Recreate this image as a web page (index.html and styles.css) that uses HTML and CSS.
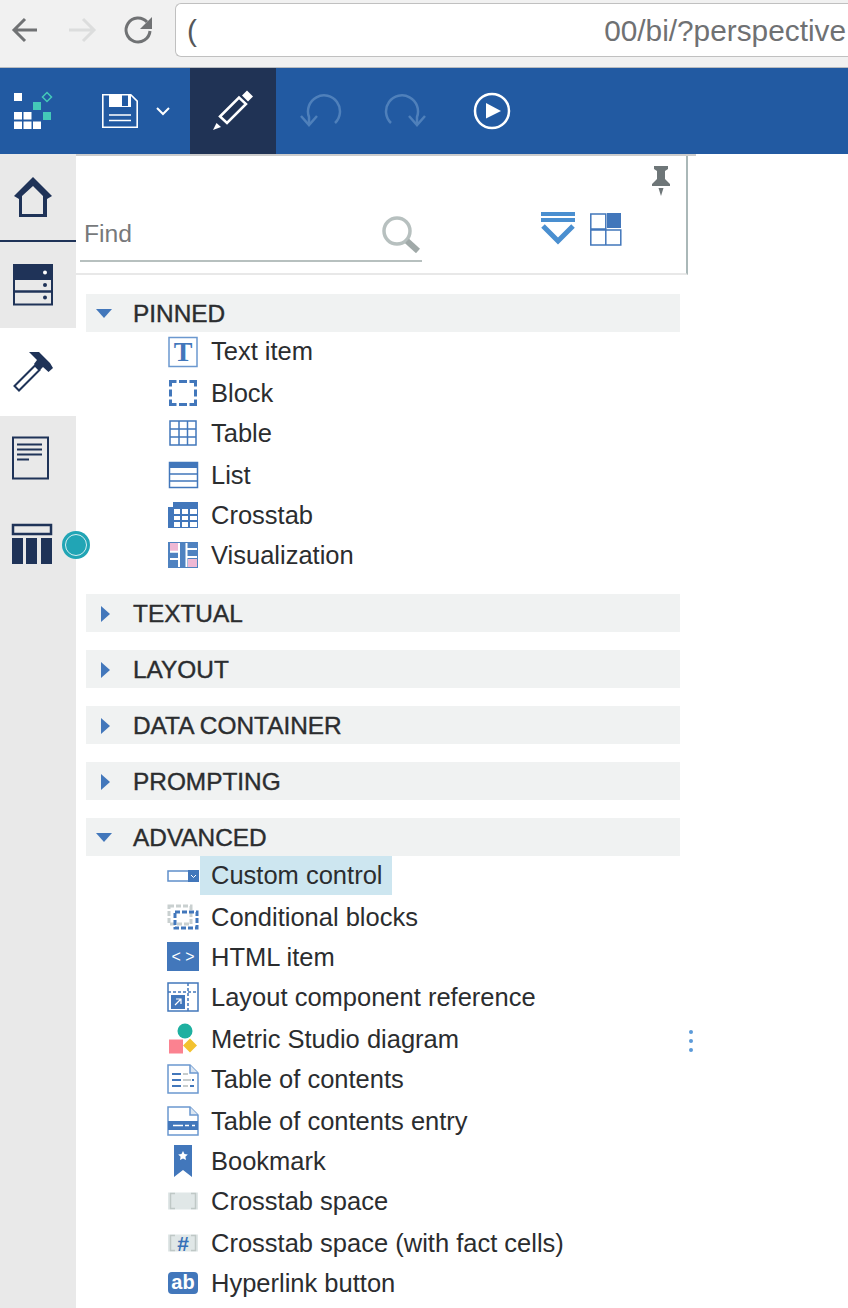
FILE: index.html
```html
<!DOCTYPE html>
<html lang="en">
<head>
  <meta charset="UTF-8">
  <title>Report authoring</title>
  <link rel="stylesheet" href="styles.css">
</head>
<body>

  <div class="browser-bar">
    <svg class="nav-icon" width="172" height="60" viewBox="0 0 172 60">
      <path d="M37 30H15M25 19L14 30l11 11" fill="none" stroke="#707274" stroke-width="3"/>
      <path d="M69 30h24M83 19l11 11-11 11" fill="none" stroke="#dcdddd" stroke-width="3"/>
      <path d="M147 22a12 12 0 1 0 3 9" fill="none" stroke="#707274" stroke-width="3"/>
      <path d="M152 17v12h-12z" fill="#707274"/>
    </svg>
    <div class="address">
      <span class="address-cut">(</span>
      <span class="address-url">00/bi/?perspective</span>
    </div>
  </div>

  <div class="toolbar">
    <div class="tool tool-logo">
      <svg width="40" height="40" viewBox="13 92 40 40">
        <g fill="#fff">
          <rect x="14" y="94" width="8" height="8"/>
          <rect x="14" y="113" width="8" height="7.5"/>
          <rect x="23.5" y="113" width="8" height="7.5"/>
          <rect x="14" y="122.500" width="8" height="7.500"/>
          <rect x="23.500" y="122.500" width="8" height="7.500"/>
          <rect x="33" y="122.500" width="8" height="7.500"/>
        </g>
        <rect x="33" y="103" width="8" height="8" fill="#44c9b8"/>
        <rect x="43" y="113" width="8" height="8" fill="#44c9b8"/>
        <path d="M47 93.500l4.500 4.500-4.500 4.500-4.500-4.500z" fill="none" stroke="#44c9b8" stroke-width="1.500"/>
      </svg>
    </div>
    <div class="tool tool-save">
      <svg width="72" height="40" viewBox="100 91 72 40">
        <path d="M102.800 94.800h28l6.400 6.400v26h-34.400z" fill="none" stroke="#fff" stroke-width="1.600"/>
        <path d="M109 94h22v13h-22z" fill="#fff"/>
        <rect x="122" y="95.500" width="6" height="10.500" fill="#225aa2"/>
        <path d="M109 115h22M109 120.500h22" stroke="#fff" stroke-width="1.500"/>
        <path d="M157 108l6 6 6-6" fill="none" stroke="#fff" stroke-width="2"/>
      </svg>
    </div>
    <div class="tool tool-edit">
      <svg width="42" height="42" viewBox="212 91 42 42">
        <path d="M220 117.500l19-19 7 6.500-19 19z" fill="none" stroke="#fff" stroke-width="2.500"/>
        <path d="M242 96.500l5-5 6 6-5 5z" fill="#fff"/>
        <path d="M213 131l3.500-7 4.500 4z" fill="#fff"/>
      </svg>
    </div>
    <div class="tool tool-undo">
      <svg width="44" height="34" viewBox="298 93 44 34">
        <path d="M335 122a16 16 0 1 0-26-6v8" fill="none" stroke="#4f80bb" stroke-width="2.500"/>
        <path d="M301 115l8 9 8-9" fill="none" stroke="#4f80bb" stroke-width="2.500"/>
      </svg>
    </div>
    <div class="tool tool-redo">
      <svg width="44" height="34" viewBox="384 93 44 34">
        <path d="M391 122a16 16 0 1 1 26-6v8" fill="none" stroke="#4f80bb" stroke-width="2.500"/>
        <path d="M409 115l8 9 8-9" fill="none" stroke="#4f80bb" stroke-width="2.500"/>
      </svg>
    </div>
    <div class="tool tool-run">
      <svg width="38" height="38" viewBox="473 92 38 38">
        <circle cx="492" cy="111" r="17" fill="none" stroke="#fff" stroke-width="2.500"/>
        <path d="M486 103l15 8-15 7.500z" fill="#fff"/>
      </svg>
    </div>
  </div>

  <div class="main">
    <aside class="rail">
      <div class="tab tab-home">
        <svg width="40" height="42" viewBox="13 177 40 42">
          <path fill-rule="evenodd" fill="#1f3358" d="M33 178l19 19-5 3v18H19v-18l-5-3zM33 187l-11 10v18h21v-18z"/>
        </svg>
      </div>
      <div class="tab tab-data">
        <svg width="40" height="42" viewBox="13 265 40 42">
          <path fill="#1f3358" d="M13 265h40v15H13z"/>
          <rect x="14" y="280" width="38" height="25.500" fill="none" stroke="#1f3358" stroke-width="2"/>
          <path d="M14 292.500h38" stroke="#1f3358" stroke-width="2.500"/>
          <circle cx="45" cy="273.500" r="2" fill="#fff"/>
          <circle cx="45" cy="286" r="2" fill="#1f3358"/>
          <circle cx="45" cy="298.500" r="2" fill="#1f3358"/>
        </svg>
      </div>
      <div class="tab tab-tools">
        <svg width="42" height="42" viewBox="12 351 42 42">
          <path d="M14.500 386l20.500-20.500 4.500 4.500-20.500 20.500z" fill="none" stroke="#1f3358" stroke-width="2"/>
          <path d="M29 352h10l11 11 3 5-4.500 4-5.500-5-3 3-6-6 3-4z" fill="#1f3358"/>
        </svg>
      </div>
      <div class="tab tab-report">
        <svg width="40" height="44" viewBox="11 436 40 44">
          <rect x="13" y="437.500" width="35" height="41" fill="none" stroke="#1f3358" stroke-width="2"/>
          <path d="M17 444.500h25M17 449.500h25M17 454.500h25M17 459.500h12" stroke="#1f3358" stroke-width="2"/>
        </svg>
      </div>
      <div class="tab tab-query">
        <svg width="42" height="42" viewBox="11 523 42 42">
          <rect x="13" y="525" width="38" height="9" fill="none" stroke="#1f3358" stroke-width="2.500"/>
          <path d="M12 538h11v26H12zM26 538h11v26H26zM41 538h11v26H41z" fill="#1f3358"/>
        </svg>
      </div>
      <div class="badge"></div>
    </aside>

    <div class="content">
      <div class="panel-edge"></div>
      <div class="finder">
        <div class="pin-row">
          <svg width="20" height="30" viewBox="0 0 20 30">
            <path d="M3 0h14v3l-3 2v8l5 5v2H1v-2l5-5V5L3 3z" fill="#6e7678"/>
            <path d="M7.500 22h5L10 30z" fill="#6e7678"/>
          </svg>
        </div>
        <div class="find-row">
          <div class="find-box">
            <span class="find-label">Find</span>
            <svg class="find-icon" width="40" height="38" viewBox="0 0 40 38">
              <circle cx="17" cy="16" r="13" fill="none" stroke="#b7c0bf" stroke-width="3.500"/>
              <path d="M27 26l11 10" stroke="#a0a9a8" stroke-width="6"/>
            </svg>
          </div>
          <svg class="collapse-icon" width="34" height="34" viewBox="0 0 34 34">
            <path d="M0 0h34v4H0zM0 6h34v4H0z" fill="#4a8fd0"/>
            <path d="M2 14l15 15 15-15" fill="none" stroke="#4a8fd0" stroke-width="5"/>
          </svg>
          <svg class="tile-icon" width="32" height="33" viewBox="0 0 32 33">
            <path d="M.8 1h15v15H.8zM.8 17h15v15H.8zM15.800 17h15v15h-15z" fill="none" stroke="#4277bb" stroke-width="1.500"/>
            <path d="M17 0h14v15H17z" fill="#4277bb"/>
          </svg>
        </div>
      </div>

      <div class="list">
        <section class="group group-open group-pinned">
          <div class="group-head"><span class="caret-down"></span>PINNED</div>
          <div class="item">
            <svg width="32" height="32" viewBox="0 0 32 32">
              <rect x="2" y="1.500" width="28" height="29" fill="#fff" stroke="#6b98cf" stroke-width="1.500"/>
              <text x="16" y="25" class="glyph-t">T</text>
            </svg>
            <span class="label">Text item</span>
          </div>
          <div class="item tall">
            <svg width="32" height="32" viewBox="0 0 32 32">
              <path d="M3.500 9.500v-5h6M22.500 4.500h6v5M28.500 22.500v5h-6M9.500 27.500h-6v-5M12 4.500h8M12 27.500h8M3.500 12.500v7M28.500 12.500v7" fill="none" stroke="#4277bb" stroke-width="3"/>
            </svg>
            <span class="label">Block</span>
          </div>
          <div class="item">
            <svg width="32" height="32" viewBox="0 0 32 32">
              <rect x="3" y="4" width="26" height="24" fill="none" stroke="#4277bb" stroke-width="1.500"/>
              <path d="M12 4v24M20.500 4v24M3 12h26M3 20h26" stroke="#4277bb" stroke-width="1.500"/>
            </svg>
            <span class="label">Table</span>
          </div>
          <div class="item tall">
            <svg width="32" height="32" viewBox="0 0 32 32">
              <rect x="2" y="3" width="29" height="6" fill="#4277bb"/>
              <rect x="2.500" y="3.500" width="28" height="25" fill="none" stroke="#4277bb" stroke-width="1.500"/>
              <path d="M2 15h29M2 22h29" stroke="#4277bb" stroke-width="1.500"/>
            </svg>
            <span class="label">List</span>
          </div>
          <div class="item">
            <svg width="32" height="32" viewBox="0 0 32 32">
              <path d="M6 3h25v26H1V8h5z" fill="#4277bb"/>
              <path d="M7 10h6v5H7zM15 10h6v5h-6zM23 10h7v5h-7zM7 17h6v4H7zM15 17h6v4h-6zM23 17h7v4h-7zM7 23h6v5H7zM15 23h6v5h-6zM23 23h7v5h-7z" fill="#fff"/>
            </svg>
            <span class="label">Crosstab</span>
          </div>
          <div class="item">
            <svg width="32" height="32" viewBox="0 0 32 32">
              <rect x="1" y="3" width="30" height="26" fill="#4f82c0"/>
              <path d="M3 4h8v8H3zM21 20h9v8h-9z" fill="#eeb8d4"/>
              <path d="M12 4v24M19.500 4v24M3 12.700h9M3 20h9M20 10h10M20 18h10" stroke="#fff" stroke-width="2"/>
            </svg>
            <span class="label">Visualization</span>
          </div>
        </section>

        <section class="group">
          <div class="group-head"><span class="caret-right"></span>TEXTUAL</div>
        </section>
        <section class="group">
          <div class="group-head"><span class="caret-right"></span>LAYOUT</div>
        </section>
        <section class="group">
          <div class="group-head"><span class="caret-right"></span>DATA CONTAINER</div>
        </section>
        <section class="group">
          <div class="group-head"><span class="caret-right"></span>PROMPTING</div>
        </section>

        <section class="group group-open">
          <div class="group-head"><span class="caret-down"></span>ADVANCED</div>
          <div class="item">
            <svg width="32" height="32" viewBox="0 0 32 32">
              <rect x="1" y="11" width="31" height="10" fill="#fff" stroke="#5f8fca" stroke-width="1.500"/>
              <rect x="21" y="10" width="11" height="12" fill="#4277bb"/>
              <path d="M24 15l2.500 2.500 2.500-2.500" fill="none" stroke="#fff"/>
            </svg>
            <span class="label label-on">Custom control</span>
          </div>
          <div class="item tall">
            <svg width="32" height="32" viewBox="0 0 32 32">
              <rect x="2" y="5" width="22" height="18" fill="none" stroke="#c9d0d0" stroke-width="3" stroke-dasharray="5 2"/>
              <rect x="8" y="11" width="22" height="16" fill="none" stroke="#4277bb" stroke-width="3" stroke-dasharray="5 2"/>
            </svg>
            <span class="label">Conditional blocks</span>
          </div>
          <div class="item">
            <svg width="32" height="32" viewBox="0 0 32 32">
              <rect y="1" width="32" height="29" fill="#4277bb"/>
              <text x="16" y="21" class="glyph-code">&lt; &gt;</text>
            </svg>
            <span class="label">HTML item</span>
          </div>
          <div class="item">
            <svg width="32" height="32" viewBox="0 0 32 32">
              <rect x="1" y="2" width="30" height="28" fill="none" stroke="#4277bb" stroke-width="1.500"/>
              <path d="M21 2v28M1 11h30" stroke="#4277bb" stroke-width="1.500" stroke-dasharray="3 2"/>
              <rect x="4" y="14" width="14" height="14" fill="#4277bb"/>
              <path d="M8 24l6-6M9 18h5v5" fill="none" stroke="#fff" stroke-width="1.200"/>
            </svg>
            <span class="label">Layout component reference</span>
          </div>
          <div class="item tall">
            <svg width="32" height="32" viewBox="0 0 32 32">
              <circle cx="18" cy="8" r="7.500" fill="#1eb0a0"/>
              <rect x="2" y="16.500" width="14" height="14" fill="#fb8290"/>
              <path d="M23 15.500l7 7-7 7-7-7z" fill="#f3c230"/>
            </svg>
            <span class="label">Metric Studio diagram</span>
          </div>
          <div class="item">
            <svg width="32" height="32" viewBox="0 0 32 32">
              <path d="M1 2h22l8 8v20H1z" fill="none" stroke="#6b98cf" stroke-width="1.500"/>
              <path d="M23 2v8h8" fill="#dbe6f2" stroke="#6b98cf" stroke-width="1.500"/>
              <path d="M5 11h9M5 17h9M5 23h9" stroke="#4277bb" stroke-width="2"/>
              <path d="M16 11h5M16 17h8M16 23h5" stroke="#c6cccc" stroke-width="2"/>
              <path d="M25 17h2M23 23h4" stroke="#4277bb" stroke-width="2"/>
            </svg>
            <span class="label">Table of contents</span>
          </div>
          <div class="item tall">
            <svg width="32" height="32" viewBox="0 0 32 32">
              <path d="M1 2h22l8 8v20H1z" fill="#fff" stroke="#6b98cf" stroke-width="1.500"/>
              <path d="M23 2v8h8" fill="#dbe6f2" stroke="#6b98cf" stroke-width="1.500"/>
              <rect x="1" y="16" width="30" height="9" fill="#4277bb"/>
              <path d="M6 20.500h10M18 20.500h4M25 20.500h3" stroke="#fff" stroke-width="1.500"/>
            </svg>
            <span class="label">Table of contents entry</span>
          </div>
          <div class="item">
            <svg width="32" height="32" viewBox="0 0 32 32">
              <path d="M7 0h18v32l-9-7-9 7z" fill="#4277bb"/>
              <path d="M16 6l1.500 3 3.300.5-2.400 2.300.6 3.300-3-1.600-3 1.600.6-3.300-2.400-2.300 3.300-.5z" fill="#fff"/>
            </svg>
            <span class="label">Bookmark</span>
          </div>
          <div class="item">
            <svg width="32" height="32" viewBox="0 0 32 32">
              <rect x="1" y="7.500" width="30" height="17" fill="#e0e7e7"/>
              <path d="M8 8.500H3.500v15H8M24 8.500h4.500v15H24" fill="none" stroke="#bfc8c6" stroke-width="1.500"/>
            </svg>
            <span class="label">Crosstab space</span>
          </div>
          <div class="item tall">
            <svg width="32" height="32" viewBox="0 0 32 32">
              <rect x="1" y="7.500" width="30" height="17" fill="#e0e7e7"/>
              <path d="M8 8.500H3.500v15H8M24 8.500h4.500v15H24" fill="none" stroke="#bfc8c6" stroke-width="1.500"/>
              <text x="16" y="24" class="glyph-hash">#</text>
            </svg>
            <span class="label">Crosstab space (with fact cells)</span>
          </div>
          <div class="item">
            <svg width="32" height="32" viewBox="0 0 32 32">
              <rect x="1" y="5" width="30" height="22" rx="4" fill="#4277bb"/>
              <text x="16" y="22" class="glyph-ab">ab</text>
            </svg>
            <span class="label">Hyperlink button</span>
          </div>
        </section>
      </div>

      <div class="kebab"><span></span><span></span><span></span></div>
    </div>
  </div>

</body>
</html>
```

FILE: styles.css
```css
html, body {
  margin: 0;
  height: 100%;
  overflow: hidden;
}

body {
  width: 848px;
  height: 1308px;
  background: #fff;
  font-family: "Liberation Sans", Arial, sans-serif;
  color: #2b2d2f;
}

svg {
  display: block;
  flex: none;
}

.browser-bar {
  display: flex;
  height: 67px;
  background: #f1f1f1;
  border-bottom: 1px solid #b9bcc0;
}

.nav-icon {
  margin-right: 3px;
}

.address {
  display: flex;
  justify-content: space-between;
  align-items: center;
  flex: 1;
  height: 50px;
  margin-top: 3px;
  padding: 2px 2px 0 11px;
  background: #fff;
  border: 1px solid #c0c0c0;
  border-right: 0;
  border-radius: 6px 0 0 6px;
  font-size: 29.8px;
  color: #6f7173;
}

.address-cut {
  color: #55585a;
}

.toolbar {
  display: flex;
  height: 86px;
  background: #225aa2;
}

.tool {
  display: flex;
  align-items: center;
  justify-content: center;
}

.tool-logo { width: 65px; }
.tool-save { width: 125px; justify-content: flex-start; }
.tool-save svg { margin-left: 35px; }
.tool-edit { width: 86px; background: #203355; }
.tool-undo { width: 88px; }
.tool-redo { width: 84px; }
.tool-run { width: 88px; }

.main {
  display: flex;
  height: 1154px;
}

.rail {
  position: relative;
  width: 76px;
  flex: none;
  background: #e9e9e9;
}

.tab {
  display: flex;
  align-items: center;
  padding-left: 13px;
}

.tab-home { height: 86px; border-bottom: 2px solid #1f3358; }
.tab-data { height: 86px; }
.tab-tools { height: 88px; padding-left: 12px; background: #fff; }
.tab-report { height: 84px; padding-left: 11px; }
.tab-query { height: 88px; padding-left: 11px; }

.badge {
  position: absolute;
  left: 65px;
  top: 380px;
  width: 20px;
  height: 20px;
  border: 1px solid #d5eef1;
  background: #21a5b5;
  border-radius: 50%;
  box-shadow: 0 0 0 3px #21a5b5;
}

.content {
  position: relative;
  flex: 1;
}

.panel-edge {
  width: 620px;
  height: 2px;
  background: #cccccc;
}

.finder {
  width: 610px;
  height: 117px;
  border-right: 2px solid #aab8b8;
  border-bottom: 2px solid #e8e8e8;
}

.pin-row {
  display: flex;
  justify-content: flex-end;
  height: 42px;
  padding: 10px 15px 0 0;
}

.find-row {
  display: flex;
  padding-left: 4px;
}

.find-box {
  display: flex;
  align-items: center;
  justify-content: space-between;
  width: 336px;
  height: 52px;
  padding: 0 2px 0 4px;
  border-bottom: 2px solid #b7c0bf;
}

.find-label {
  font-size: 24.7px;
  color: #77797b;
}

.collapse-icon {
  margin: 4px 15px 0 119px;
}

.tile-icon {
  margin-top: 5px;
}

.list {
  width: 594px;
  padding: 19px 0 0 10px;
}

.group {
  margin-bottom: 18px;
}

.group-head {
  display: flex;
  align-items: center;
  height: 37px;
  padding-top: 1px;
  background: #f0f2f2;
  font-size: 24.4px;
  -webkit-text-stroke: 0.4px #2b2d2f;
}

.caret-down {
  width: 0;
  height: 0;
  margin: 0 21px 0 10px;
  border-left: 8px solid transparent;
  border-right: 8px solid transparent;
  border-top: 9px solid #4277bb;
}

.caret-right {
  width: 0;
  height: 0;
  margin: 0 23px 0 15px;
  border-top: 8px solid transparent;
  border-bottom: 8px solid transparent;
  border-left: 9px solid #4277bb;
}

.item {
  display: flex;
  align-items: center;
  height: 40px;
  padding-left: 81px;
  font-size: 25.5px;
}

.group-head + .item {
  height: 39px;
}

.item.tall {
  margin-top: 2px;
}

.group-pinned {
  padding-bottom: 1px;
}

.label {
  display: flex;
  align-items: center;
  height: 39px;
  margin-left: 1px;
  padding: 0 10px 0 11px;
}

.label-on {
  background: #cde6f0;
}

.glyph-t {
  font-family: "Liberation Serif", serif;
  font-weight: bold;
  font-size: 28px;
  text-anchor: middle;
  fill: #4277bb;
}

.glyph-code {
  font-size: 16px;
  text-anchor: middle;
  fill: #fff;
}

.glyph-hash {
  font-weight: bold;
  font-size: 21px;
  text-anchor: middle;
  fill: #3570b8;
}

.glyph-ab {
  font-weight: bold;
  font-size: 20px;
  text-anchor: middle;
  fill: #fff;
}

.kebab {
  position: absolute;
  left: 613px;
  top: 876px;
  display: flex;
  flex-direction: column;
  gap: 5px;
}

.kebab span {
  width: 4px;
  height: 4px;
  border-radius: 50%;
  background: #5c9ad8;
}
```
